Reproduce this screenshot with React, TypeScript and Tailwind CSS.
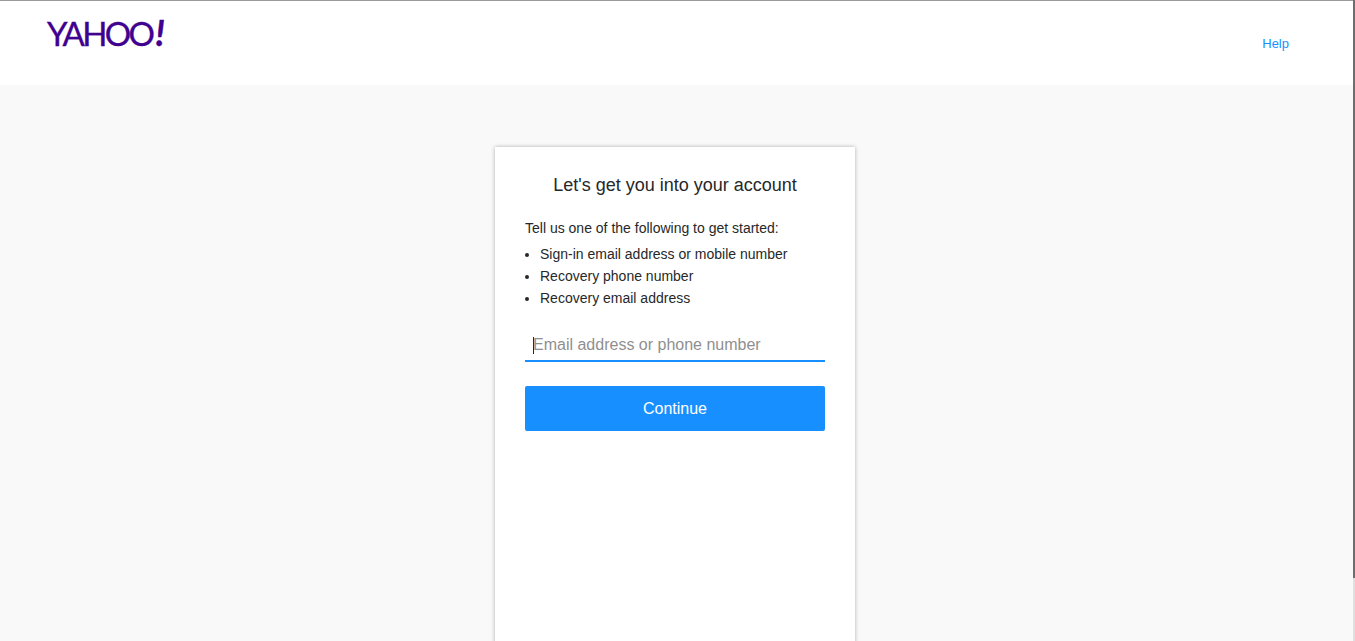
export default function App() {
  return (
    <div className="relative h-[641px] overflow-hidden bg-[#f9f9f9] font-['Liberation_Sans',Arial,sans-serif] text-[#26282a]">
      <header className="flex h-[85px] items-start justify-between border-t border-[#999999] bg-white pl-[47px] pr-[66px]">
        <div className="mt-[13px] flex h-[38px] items-center font-['Lato',sans-serif] text-[33px] leading-[38px] text-[#400090] [-webkit-text-stroke:0.35px_#400090]" aria-label="Yahoo!">
          <span className="tracking-[-2.7px]">YAHOO</span>
          <span className="ml-[3px] -mt-[3px] text-[36px] font-bold italic">!</span>
        </div>
        <a className="mt-[35px] text-[13px] leading-[15px] text-[#188fff]" href="#">Help</a>
      </header>
      <main className="flex justify-center pt-[62px] pr-[5px]">
        <section className="h-[600px] w-[360px] bg-white px-[30px] pt-[28px] shadow-[0_0_4px_rgba(0,0,0,0.3)]">
          <h1 className="text-center text-[18px] leading-[21px]">Let's get you into your account</h1>
          <p className="mt-[24px] text-[14px] leading-[17px]">Tell us one of the following to get started:</p>
          <ul className="mt-[6px] list-disc pl-[15px] text-[14px] leading-[22px]">
            <li>Sign-in email address or mobile number</li>
            <li>Recovery phone number</li>
            <li>Recovery email address</li>
          </ul>
          <div className="relative mt-[14px] h-[39px] border-b-2 border-[#188fff]">
            <span className="absolute left-[8px] top-[14px] h-[17px] w-px bg-[#26282a]" />
            <input className="h-full w-full bg-transparent pl-[8px] pt-[7px] text-[16px] outline-none placeholder:text-[#8f8f8f]" placeholder="Email address or phone number" />
          </div>
          <button className="mt-[24px] h-[45px] w-full rounded-[2px] bg-[#188fff] text-[16px] text-white">Continue</button>
        </section>
      </main>
      <div className="absolute right-0 top-0 h-full w-[2px] bg-[#e0e0e0]">
        <div className="h-[578px] bg-[#6e6e6e]" />
      </div>
    </div>
  );
}
